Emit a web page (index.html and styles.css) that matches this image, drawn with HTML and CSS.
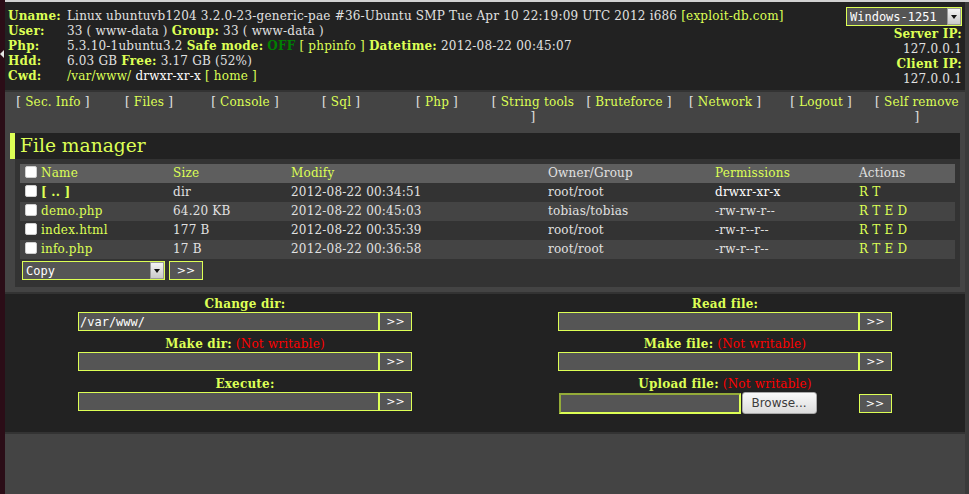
FILE: index.html
```html
<!DOCTYPE html>
<html>
<head>
<meta charset="utf-8">
<title>File manager</title>
<link rel="stylesheet" href="styles.css">
</head>
<body>
<div class="screen">
  <div class="left-edge"><span class="grip"></span></div>
  <div class="page">
    <table class="info head">
      <tr>
        <td class="labels"><span class="k">Uname:<br>User:<br>Php:<br>Hdd:<br>Cwd:</span></td>
        <td class="vals">Linux ubuntuvb1204 3.2.0-23-generic-pae #36-Ubuntu SMP Tue Apr 10 22:19:09 UTC 2012 i686 <a href="#">[exploit-db.com]</a><br>33 ( www-data ) <span class="k">Group:</span> 33 ( www-data )<br>5.3.10-1ubuntu3.2 <span class="k">Safe mode:</span> <b class="off">OFF</b> <a href="#">[ phpinfo ]</a> <span class="k">Datetime:</span> 2012-08-22 00:45:07<br>6.03 GB <span class="k">Free:</span> 3.17 GB (52%)<br><a href="#">/var/www/</a> <span class="w">drwxr-xr-x</span> <a href="#">[ home ]</a></td>
        <td class="side">
          <span class="sel sel-cs"><select><option>Windows-1251</option></select><span class="arrow"></span></span><br>
          <span class="k">Server IP:</span><br>127.0.0.1<br><span class="k">Client IP:</span><br>127.0.0.1
        </td>
      </tr>
    </table>

    <table class="menu">
      <tr>
        <th>[ <a href="#">Sec. Info</a> ]</th>
        <th>[ <a href="#">Files</a> ]</th>
        <th>[ <a href="#">Console</a> ]</th>
        <th>[ <a href="#">Sql</a> ]</th>
        <th>[ <a href="#">Php</a> ]</th>
        <th>[ <a href="#">String tools</a> ]</th>
        <th>[ <a href="#">Bruteforce</a> ]</th>
        <th>[ <a href="#">Network</a> ]</th>
        <th>[ <a href="#">Logout</a> ]</th>
        <th>[ <a href="#">Self remove</a> ]</th>
      </tr>
    </table>

    <div class="wrap">
      <h1>File manager</h1>
      <div class="content">
        <table class="main">
          <colgroup>
            <col class="c-chk"><col class="c-name"><col class="c-size"><col class="c-mod"><col class="c-own"><col class="c-perm"><col class="c-act">
          </colgroup>
          <tr>
            <th><input type="checkbox" class="chk"></th>
            <th><a href="#">Name</a></th>
            <th><a href="#">Size</a></th>
            <th><a href="#">Modify</a></th>
            <th>Owner/Group</th>
            <th><a href="#">Permissions</a></th>
            <th>Actions</th>
          </tr>
          <tr class="l2">
            <td><input type="checkbox" class="chk"></td>
            <td><a href="#" class="dir">[ .. ]</a></td>
            <td>dir</td>
            <td>2012-08-22 00:34:51</td>
            <td>root/root</td>
            <td class="w">drwxr-xr-x</td>
            <td><a href="#">R</a> <a href="#">T</a></td>
          </tr>
          <tr class="l1">
            <td><input type="checkbox" class="chk"></td>
            <td><a href="#">demo.php</a></td>
            <td>64.20 KB</td>
            <td>2012-08-22 00:45:03</td>
            <td>tobias/tobias</td>
            <td>-rw-rw-r--</td>
            <td><a href="#">R</a> <a href="#">T</a> <a href="#">E</a> <a href="#">D</a></td>
          </tr>
          <tr class="l2">
            <td><input type="checkbox" class="chk"></td>
            <td><a href="#">index.html</a></td>
            <td>177 B</td>
            <td>2012-08-22 00:35:39</td>
            <td>root/root</td>
            <td>-rw-r--r--</td>
            <td><a href="#">R</a> <a href="#">T</a> <a href="#">E</a> <a href="#">D</a></td>
          </tr>
          <tr class="l1">
            <td><input type="checkbox" class="chk"></td>
            <td><a href="#">info.php</a></td>
            <td>17 B</td>
            <td>2012-08-22 00:36:58</td>
            <td>root/root</td>
            <td>-rw-r--r--</td>
            <td><a href="#">R</a> <a href="#">T</a> <a href="#">E</a> <a href="#">D</a></td>
          </tr>
          <tr>
            <td colspan="7" class="actrow"><span class="sel sel-act"><select><option>Copy</option></select><span class="arrow"></span></span>&nbsp;<button class="go go-act">&gt;&gt;</button></td>
          </tr>
        </table>
      </div>
    </div>

    <table class="info tools">
      <tr>
        <td><span class="k">Change dir:</span><br><input class="tinp" type="text" value="/var/www/"><button class="go">&gt;&gt;</button></td>
        <td><span class="k">Read file:</span><br><input class="tinp" type="text"><button class="go">&gt;&gt;</button></td>
      </tr>
      <tr>
        <td><span class="k">Make dir:</span> <span class="nw">(Not writable)</span><br><input class="tinp" type="text"><button class="go">&gt;&gt;</button></td>
        <td><span class="k">Make file:</span> <span class="nw">(Not writable)</span><br><input class="tinp" type="text"><button class="go">&gt;&gt;</button></td>
      </tr>
      <tr>
        <td><span class="k">Execute:</span><br><input class="tinp" type="text"><button class="go">&gt;&gt;</button></td>
        <td><span class="k">Upload file:</span> <span class="nw">(Not writable)</span><br><span class="file"><span class="file-box"></span><span class="browse">Browse...</span></span><button class="go go-up">&gt;&gt;</button><br>&nbsp;</td>
      </tr>
    </table>
  </div>
  <div class="right-edge"></div>
</div>
</body>
</html>
```

FILE: styles.css
```css
html, body {
  margin: 0;
  padding: 0;
}
body {
  background: #444;
  color: #e1e1e1;
  font-family: "DejaVu Serif", serif;
  font-size: 12px;
  letter-spacing: 0.2px;
  overflow: hidden;
}
.screen {
  display: flex;
  height: 494px;
}
.left-edge {
  width: 5px;
  background: #2b0d17;
  position: relative;
  flex: none;
}
.grip {
  position: absolute;
  left: 0;
  top: 50px;
  width: 0;
  height: 0;
  border-top: 4px solid transparent;
  border-bottom: 4px solid transparent;
  border-right: 4px solid #e6e6e6;
}
.page {
  width: 960px;
  flex: none;
  border-top: 2px solid #d2d2d2;
  background: #444;
}
.right-edge {
  flex: 1;
  background: #3a3a3a;
  border-top: 2px solid #d2d2d2;
}
a {
  color: #df5;
  text-decoration: none;
}
.k {
  color: #df5;
  font-weight: bold;
}
.off {
  color: #008000;
}
.w {
  color: #fff;
}
.nw {
  color: #f00;
}

/* header */
table {
  border-spacing: 0;
  border-collapse: separate;
}
.info {
  width: 100%;
  background: #222;
}
.info td {
  padding: 3px;
  vertical-align: top;
  line-height: 15px;
  color: #e1e1e1;
}
.head .labels,
.head .side {
  width: 1px;
  white-space: nowrap;
}
.head .labels,
.head .vals {
  vertical-align: middle;
}
.head .vals {
  white-space: nowrap;
}
.head .side {
  text-align: right;
}

/* custom select */
.sel {
  position: relative;
  display: inline-block;
  vertical-align: top;
}
.sel select {
  appearance: none;
  -webkit-appearance: none;
  display: block;
  margin: 0;
  height: 19px;
  box-sizing: border-box;
  border: 1px solid #df5;
  background: #555;
  color: #fff;
  font: 12px "DejaVu Sans Mono", monospace;
  letter-spacing: 0;
  padding: 0 3px;
  border-radius: 0;
}
.sel-cs select {
  width: 116px;
}
.sel-act select {
  width: 143px;
}
.arrow {
  position: absolute;
  top: 2px;
  right: 2px;
  bottom: 2px;
  width: 12px;
  background: linear-gradient(#f4f4f4, #c9c9c9);
  box-shadow: 0 0 0 1px #9a9a9a;
}
.arrow::after {
  content: "";
  position: absolute;
  left: 3px;
  top: 6px;
  border-left: 3px solid transparent;
  border-right: 3px solid transparent;
  border-top: 4px solid #111;
}
.head .sel {
  margin-top: 2px;
  margin-bottom: 1px;
}

/* menu */
.menu {
  width: 100%;
  table-layout: fixed;
  border-top: 2px solid #333;
}
.menu th {
  width: 10%;
  padding: 3px;
  font-weight: normal;
  text-align: center;
  vertical-align: top;
  line-height: 15px;
  color: #e1e1e1;
}

/* file manager */
.wrap {
  margin: 5px;
}
h1 {
  margin: 0;
  padding: 2px 5px;
  border-left: 5px solid #df5;
  background: #222;
  color: #df5;
  font: normal 18.67px "DejaVu Serif", serif;
  letter-spacing: 0;
  line-height: 22px;
}
.content {
  margin-left: 5px;
  padding: 5px;
  background: #333;
}
.main {
  width: 100%;
  table-layout: fixed;
}
.c-chk { width: 19px; }
.c-name { width: 132px; }
.c-size { width: 118px; }
.c-mod { width: 257px; }
.c-own { width: 167px; }
.c-perm { width: 144px; }
.c-act { width: 98px; }
.main th,
.main td {
  padding: 2px;
  line-height: 15px;
  text-align: left;
  vertical-align: top;
  font-weight: normal;
  white-space: nowrap;
  color: #e1e1e1;
}
.main th {
  background: #5e5e5e;
}
.main td.w {
  color: #fff;
}
.l1 { background: #444; }
.l2 { background: #333; }
.dir {
  font-weight: bold;
}
.chk {
  appearance: none;
  -webkit-appearance: none;
  display: block;
  width: 12px;
  height: 12px;
  margin: 0 0 0 3px;
  background: #fff;
  border: 1px solid #cfcfcf;
  border-radius: 2px;
  box-sizing: border-box;
}
.actrow {
  padding-top: 2px;
}

/* buttons and inputs */
.go {
  display: inline-block;
  vertical-align: top;
  width: 33px;
  height: 19px;
  margin: 0;
  padding: 0;
  box-sizing: border-box;
  border: 1px solid #df5;
  background: #555;
  color: #fff;
  font: 11px "DejaVu Sans", sans-serif;
  letter-spacing: 0;
  border-radius: 0;
}
.go-act {
  width: 34px;
}
.tinp {
  display: inline-block;
  vertical-align: top;
  width: 301px;
  height: 19px;
  margin: 0;
  padding: 0 1px;
  box-sizing: border-box;
  border: 1px solid #df5;
  background: #555;
  color: #fff;
  font: 12px "DejaVu Sans Mono", monospace;
  letter-spacing: 0;
  outline: none;
}

/* tools */
.tools {
  border-top: 2px solid #333;
  border-bottom: 2px solid #333;
}
.tools td {
  width: 50%;
  text-align: center;
}
.file {
  display: inline-flex;
  vertical-align: top;
  align-items: center;
  gap: 1px;
  width: 300px;
  height: 22px;
}
.file-box {
  width: 182px;
  height: 21px;
  box-sizing: border-box;
  border: 2px inset #df5;
  background: #555;
}
.browse {
  width: 75px;
  height: 22px;
  box-sizing: border-box;
  border: 1px solid #a9a9a9;
  border-radius: 3px;
  background: linear-gradient(#fafafa, #dcdcdc);
  color: #3c3c3c;
  font: 12px "DejaVu Sans", sans-serif;
  letter-spacing: 0;
  line-height: 20px;
  text-align: center;
}
.go-up {
  margin-top: 2px;
}
```
